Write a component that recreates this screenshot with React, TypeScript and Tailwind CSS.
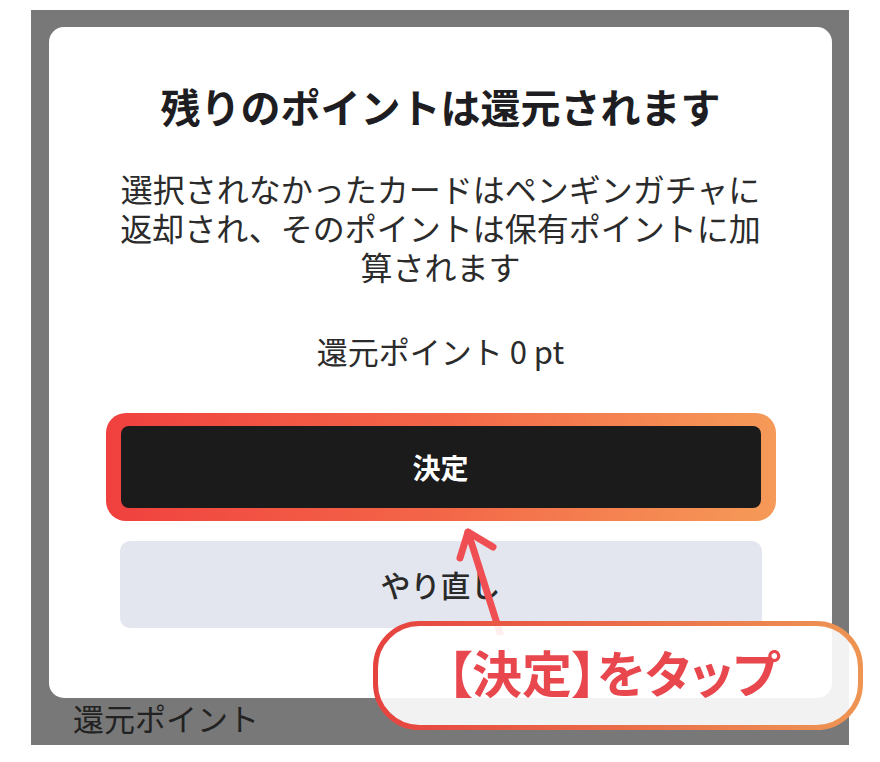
import React from 'react';

// annotation arrow pointing up at the 決定 button
const Arrow = () => (
  <svg
    className="absolute left-[440px] top-[515px]"
    width="80"
    height="120"
    viewBox="0 0 80 120"
    fill="none"
  >
    <g stroke="#ef4f52" strokeWidth="7" strokeLinecap="round" strokeLinejoin="round">
      <path d="M28 17 L60 118" />
      <path d="M20 43 L28 17 L53 32" />
    </g>
  </svg>
);

const Callout = () => (
  <div className="absolute left-[373px] top-[621px] w-[490px] h-[109px]">
    <svg className="absolute inset-0" width="490" height="109" viewBox="0 0 490 109">
      <defs>
        <linearGradient id="calloutStroke" x1="0" y1="0" x2="1" y2="0">
          <stop offset="0" stopColor="#e6433f" />
          <stop offset="1" stopColor="#ee9553" />
        </linearGradient>
      </defs>
      <rect
        x="2.5"
        y="2.5"
        width="485"
        height="104"
        rx="44"
        fill="rgba(255,255,255,0.9)"
        stroke="url(#calloutStroke)"
        strokeWidth="5"
      />
    </svg>
    <div className="relative h-full flex items-center justify-center pb-[10px] pr-[10px]">
      <span className="text-[50px] leading-none font-bold text-[#e8474d] [font-feature-settings:'palt']">
        【決定】をタップ
      </span>
    </div>
  </div>
);

export default function App() {
  return (
    <div
      className="relative w-[880px] h-[762px] overflow-hidden bg-white pt-[10px] pl-[31px]"
      style={{ fontFamily: '"Noto Sans CJK JP", "Noto Sans", sans-serif' }}
    >
      <div className="w-[818px] h-[735px] bg-[#787878] pt-[17px] pl-[18px]">
        <div className="w-[783px] h-[671px] bg-white rounded-[15px] pt-[59px] px-[71px] flex flex-col items-center">
          <h2 className="text-[40px] leading-[40px] font-bold text-[#1d1d22] text-center">
            残りのポイントは還元されます
          </h2>
          <p className="mt-[43px] text-[32px] leading-[39px] text-[#2b2b2b] text-center whitespace-nowrap">
            選択されなかったカードはペンギンガチャに
            <br />
            返却され、そのポイントは保有ポイントに加
            <br />
            算されます
          </p>
          <p className="mt-[45px] text-[31px] leading-[39px] text-[#2b2b2b]">還元ポイント 0 pt</p>

          <div className="mt-[43px] w-[670px] rounded-[20px] px-[15px] py-[13px] bg-gradient-to-r from-[#f0403f] via-[#f36648] to-[#f59a58]">
            <button className="w-full h-[82px] rounded-[8px] bg-[#1b1b1b] text-white text-[28px] font-bold flex items-center justify-center">
              決定
            </button>
          </div>

          <button className="mt-[20px] w-[642px] h-[87px] rounded-[10px] bg-[#e3e6ef] text-[#2a2a2a] text-[30px] font-medium flex items-center justify-center">
            やり直し
          </button>
        </div>
        <div className="mt-[3px] pl-[24px] text-[31px] leading-[34px] text-[#222]">還元ポイント</div>
      </div>

      <Arrow />
      <Callout />
    </div>
  );
}
